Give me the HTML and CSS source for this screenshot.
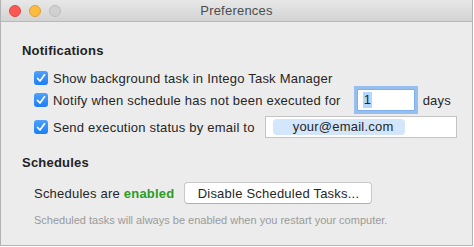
FILE: index.html
```html
<!DOCTYPE html>
<html lang="en">
<head>
  <meta charset="UTF-8" />
  <title>Preferences</title>
  <link rel="stylesheet" href="styles.css">
</head>
<body>
  <div class="window">
    <div class="titlebar">
      <div class="lights">
        <span class="light red"></span>
        <span class="light yellow"></span>
        <span class="light gray"></span>
      </div>
      <div class="title">Preferences</div>
    </div>

    <div class="content">
      <h2>Notifications</h2>
      <div class="row r1">
        <span class="check"><svg viewBox="0 0 14 14"><path d="M3.5 7.3 L6 10 L10.5 3.8" /></svg></span>
        <span>Show background task in Intego Task Manager</span>
      </div>
      <div class="row r2">
        <span class="check"><svg viewBox="0 0 14 14"><path d="M3.5 7.3 L6 10 L10.5 3.8" /></svg></span>
        <span>Notify when schedule has not been executed for</span>
        <span class="field days-field"><span class="sel">1</span></span>
        <span>days</span>
      </div>
      <div class="row r3">
        <span class="check"><svg viewBox="0 0 14 14"><path d="M3.5 7.3 L6 10 L10.5 3.8" /></svg></span>
        <span>Send execution status by email to</span>
        <span class="field email-field"><span class="token">your@email.com</span></span>
      </div>

      <h2 class="sched">Schedules</h2>
      <div class="row r4">
        <span>Schedules are <b class="on">enabled</b></span>
        <button class="btn">Disable Scheduled Tasks...</button>
      </div>
      <p class="note">Scheduled tasks will always be enabled when you restart your computer.</p>
    </div>
  </div>
</body>
</html>
```

FILE: styles.css
```css
* { box-sizing: border-box; margin: 0; padding: 0; }
html, body { width: 474px; height: 247px; overflow: hidden; background: #fff; }
body { font-family: "Liberation Sans", Arial, sans-serif; font-size: 13px; letter-spacing: 0.22px; color: #262626; }

.window {
  width: 473px;
  height: 246px;
  background: #ececec;
  border: 1px solid #b3b3b3;
  border-top: none;
  display: flex;
  flex-direction: column;
}
.titlebar {
  height: 22px;
  flex: none;
  background: linear-gradient(#e8e8e8, #d3d3d3);
  border-bottom: 1px solid #b9b9b9;
  position: relative;
  display: flex;
  align-items: center;
}
.lights { display: flex; gap: 8px; padding-left: 8px; }
.light { width: 12px; height: 12px; border-radius: 50%; display: block; }
.red { background: #fc5753; border: 1px solid #df4744; }
.yellow { background: #fdbc40; border: 1px solid #de9f34; }
.gray { background: #d0d0d0; border: 1px solid #bdbdbd; }
.title {
  position: absolute;
  left: 0; right: 0; top: 0; bottom: 0;
  text-align: center;
  line-height: 21px;
  color: #4d4d4d;
  font-size: 13px;
}

.content { padding: 21px 0 0 21px; }
h2 { font-size: 13px; font-weight: bold; color: #222; height: 16px; line-height: 16px; margin-bottom: 11px; }
.sched { margin-top: 16px; margin-bottom: 10px; }

.row { display: flex; align-items: center; padding-left: 12px; gap: 5px; white-space: nowrap; }
.r1 { height: 16px; margin-bottom: 2px; }
.r2 { height: 24px; margin-bottom: 3px; }
.r3 { height: 24px; }
.r4 { height: 24px; gap: 9px; }

.check {
  width: 14px; height: 14px;
  border-radius: 3px;
  background: linear-gradient(#4da2fc, #1b7ef5);
  display: flex; align-items: center; justify-content: center;
  flex: none;
}
.check svg { width: 14px; height: 14px; }
.check path { fill: none; stroke: #fff; stroke-width: 1.7; stroke-linecap: round; stroke-linejoin: round; }

.field {
  background: #fff;
  border: 1px solid #c4c4c4;
  height: 22px;
  display: flex; align-items: center;
}
.days-field {
  width: 58px;
  margin-left: 11px;
  margin-right: 3px;
  padding-left: 5px;
  border-color: #7fb0ec;
  box-shadow: 0 0 0 3px #96bff0;
}
.sel { background: #b3d7ff; padding: 0 1px; line-height: 16px; }
.email-field { width: 192px; margin-left: 5px; padding-left: 7px; }
.token {
  background: #d4e6fb;
  border-radius: 4px;
  padding: 0 0 0 20px;
  line-height: 16px;
  width: 132px;
}

.on { color: #2c9b26; font-weight: bold; }
.btn {
  font-family: inherit;
  font-size: 13px;
  letter-spacing: 0.22px;
  color: #262626;
  background: #fff;
  border: 1px solid #c8c8c8;
  border-bottom-color: #b0b0b0;
  border-radius: 4px;
  height: 22px;
  width: 188px;
  padding: 0;
  text-align: center;
  margin-left: 1px;
}
.note { font-size: 11px; color: #9a9a9a; padding-left: 12px; margin-top: 9px; letter-spacing: 0; }
```
